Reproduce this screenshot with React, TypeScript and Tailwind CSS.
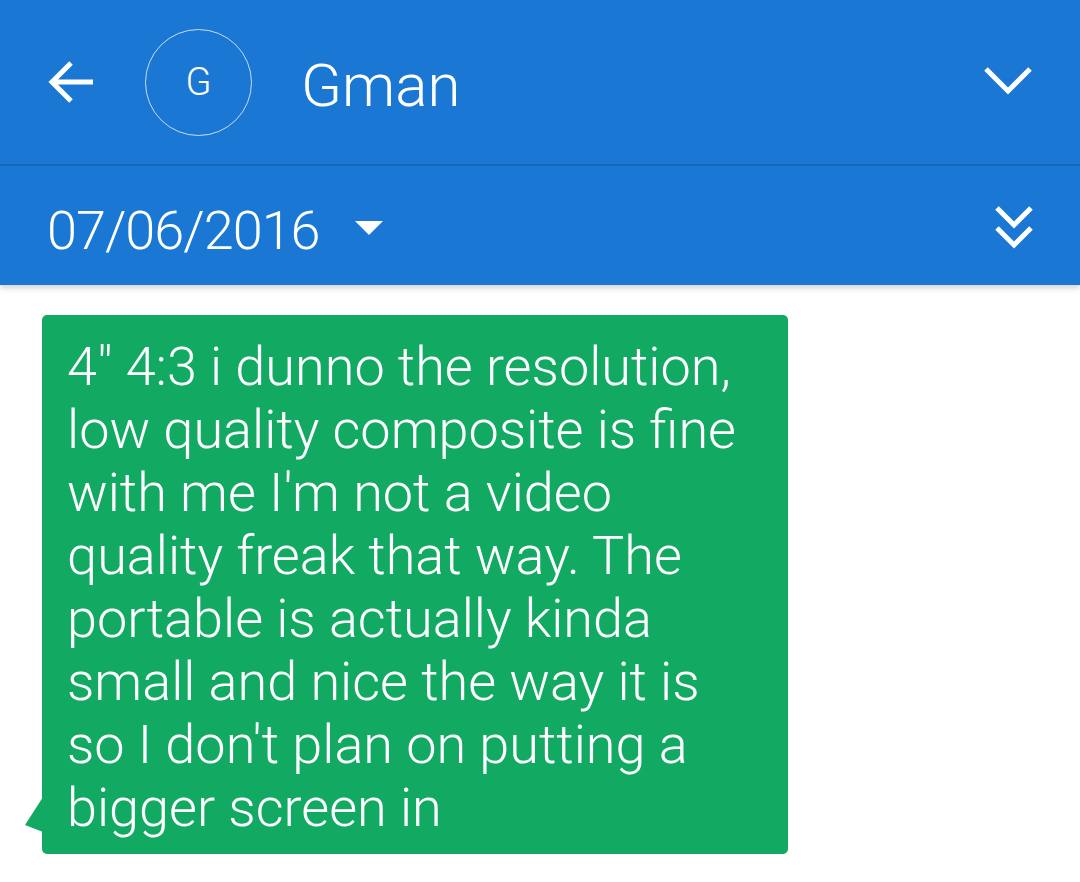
import React from "react";

const lines = [
  "4\" 4:3 i dunno the resolution,",
  "low quality composite is fine",
  "with me I'm not a video",
  "quality freak that way. The",
  "portable is actually kinda",
  "small and nice the way it is",
  "so I don't plan on putting a",
  "bigger screen in",
];

export default function App() {
  return (
    <div
      className="w-[1080px] h-[882px] bg-white overflow-hidden"
      style={{ fontFamily: "Roboto, 'Noto Sans', sans-serif" }}
    >
      <div className="relative z-10 shadow-[0_3px_6px_rgba(0,0,0,0.18)]">
        <div className="h-[166px] bg-[#1a78d4] border-b-2 border-[#1565b8] flex items-center text-white">
          <div className="w-[47px]" />
          <svg width="48" height="48" viewBox="0 0 48 48" className="shrink-0">
            <path d="M46 24H6M24 5L5 24l19 19" fill="none" stroke="white" strokeWidth="5" />
          </svg>
          <div className="ml-[50px] w-[107px] h-[107px] rounded-full border-[1.5px] border-[#c8dcf2] flex items-center justify-center text-[38px] font-light leading-none shrink-0">
            G
          </div>
          <div className="ml-[49px] mt-[8px] text-[60px] font-light leading-none">Gman</div>
          <div className="flex-1" />
          <svg width="50" height="32" viewBox="0 0 50 32" className="mr-[47px] shrink-0">
            <path d="M3 3l22 22L47 3" fill="none" stroke="white" strokeWidth="5" />
          </svg>
        </div>
        <div className="h-[119px] bg-[#1a78d4] flex items-center text-white">
          <div className="ml-[47px] mt-[10px] text-[54px] font-light leading-none tracking-[-1px]">07/06/2016</div>
          <svg width="30" height="16" viewBox="0 0 30 16" className="ml-[34px] mt-[4px] shrink-0">
            <path d="M1 1h28L15 15z" fill="white" />
          </svg>
          <div className="flex-1" />
          <svg width="40" height="44" viewBox="0 0 40 44" className="mr-[46px] mt-[2px] shrink-0">
            <path d="M3 3l17 17L37 3M3 23l17 17L37 23" fill="none" stroke="white" strokeWidth="5" />
          </svg>
        </div>
      </div>
      <div className="pt-[30px] pl-[42px]">
        <div className="relative w-[746px] h-[539px] bg-[#12aa63] rounded-[5px] pl-[25px] pt-[20px] text-white text-[54px] font-light leading-[63px]">
          <svg width="20" height="36" viewBox="0 0 20 36" className="absolute left-[-18px] top-[482px]">
            <path d="M19 0L1 28l18 7z" fill="#12aa63" />
          </svg>
          {lines.map((l, i) => (
            <div key={i} className="whitespace-nowrap">{l}</div>
          ))}
        </div>
      </div>
    </div>
  );
}
